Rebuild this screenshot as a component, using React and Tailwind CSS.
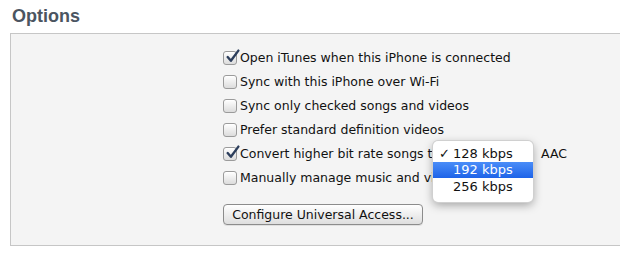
import React from "react";

function Check({ checked }) {
  return (
    <span className="relative inline-flex h-[14px] w-[14px] shrink-0 items-center justify-center rounded-[3px] border border-[#9b9b9b] bg-gradient-to-b from-[#ffffff] to-[#dcdcdc] shadow-[inset_0_1px_0_#fff]">
      {checked && (
        <svg viewBox="0 0 14 14" className="absolute left-[1px] top-[-3px] h-[15px] w-[15px]">
          <path d="M2.5 7.5 L5.5 11 L12.5 1.5" fill="none" stroke="#2c3e5c" strokeWidth="2.2" strokeLinecap="round" strokeLinejoin="round" />
        </svg>
      )}
    </span>
  );
}

function Row({ checked, children }) {
  return (
    <div className="relative flex h-[24px] items-center gap-[3px]">
      <Check checked={checked} />
      <span className="whitespace-nowrap">{children}</span>
    </div>
  );
}

export default function App() {
  return (
    <div className="h-[256px] w-[620px] overflow-hidden bg-white text-[12.5px] text-[#111]" style={{ fontFamily: '"DejaVu Sans", "Liberation Sans", sans-serif' }}>
      <div className="pl-[12px] pt-[4px] text-[18px] font-bold leading-[24px] text-[#4b5561]" style={{ fontFamily: '"Liberation Sans", Arial, sans-serif' }}>
        Options
      </div>
      <div className="ml-[10px] mt-[5px] h-[213px] border-y border-l border-[#c6c6c6] bg-[#f4f4f4] pl-[212px] pt-[12px]">
        <Row checked>Open iTunes when this iPhone is connected</Row>
        <Row>Sync with this iPhone over Wi-Fi</Row>
        <Row>Sync only checked songs and videos</Row>
        <Row>Prefer standard definition videos</Row>
        <div className="relative flex h-[24px] items-center gap-[3px]">
          <Check checked />
          <span className="w-[193px] shrink-0 whitespace-nowrap">Convert higher bit rate songs to</span>
          <span className="ml-[105px] whitespace-nowrap">AAC</span>
          <div className="absolute left-[210px] top-[-1px] z-10 w-[100px] rounded-[5px] bg-white pb-[7px] pt-[4px] text-[13px] shadow-[0_3px_10px_rgba(0,0,0,0.35)] ring-1 ring-[#d0d0d0]">
            <div className="flex h-[17px] items-center pl-[6px]">
              <span className="w-[14px] leading-none">✓</span>
              <span>128 kbps</span>
            </div>
            <div className="flex h-[16px] items-center bg-gradient-to-b from-[#4a8df8] to-[#1d63e8] pl-[20px] text-white">
              192 kbps
            </div>
            <div className="flex h-[17px] items-center pl-[20px]">256 kbps</div>
          </div>
        </div>
        <Row>Manually manage music and videos</Row>
        <div className="mt-[14px]">
          <button className="h-[21px] w-[200px] rounded-[4px] border border-[#8c8c8c] bg-gradient-to-b from-[#ffffff] to-[#dedede] text-center text-[12.5px] leading-[19px] text-[#111] shadow-[0_1px_0_rgba(0,0,0,0.08)]">
            Configure Universal Access...
          </button>
        </div>
      </div>
    </div>
  );
}
